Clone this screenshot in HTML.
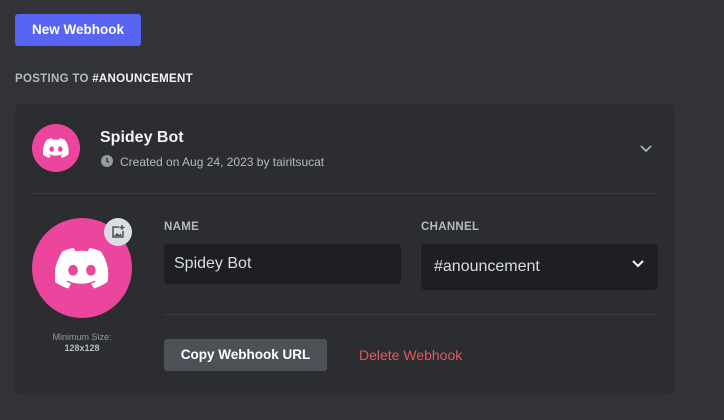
<!DOCTYPE html>
<html><head><style>
*{margin:0;padding:0;box-sizing:border-box}
body{width:724px;height:420px;background:#313338;font-family:"Liberation Sans",sans-serif;position:relative;overflow:hidden;color:#f2f3f5}
.abs{position:absolute}
.btn{left:15px;top:14px;width:126px;height:32px;background:#5865f2;border-radius:3px;color:#fff;font-size:13.5px;font-weight:bold;text-align:center;line-height:32px}
.lbl{font-size:11.5px;font-weight:bold;color:#b5bac1;letter-spacing:.3px}
.card{left:15px;top:104px;width:660px;height:291px;background:#2b2d31;border-radius:6px}
.av{border-radius:50%;background:#eb459e;display:flex;align-items:center;justify-content:center}
.inp{background:#1e1f22;border-radius:4px;font-size:16px;color:#dbdee1;padding-left:10px}
</style></head><body>
<div class="abs btn">New Webhook</div>
<div class="abs lbl" style="left:15px;top:73px">POSTING TO <span style="color:#f2f3f5">#ANOUNCEMENT</span></div>
<div class="abs card"></div>
<div class="abs av" style="left:32px;top:124px;width:48px;height:48px">
<svg width="26" height="20" viewBox="0 0 26 20"><path fill="#fff" d="M22 2C20.3 1.2 18.5.6 16.6.3l-.8 1.6c-2-.3-4-.3-6 0L9 .3C7.1.6 5.3 1.2 3.6 2 .3 7 -.6 11.8-.2 16.6c2.2 1.6 4.4 2.6 6.5 3.3l1.4-2.3c-.8-.3-1.5-.7-2.2-1.1l.5-.4c4.3 2 8.9 2 13.1 0l.5.4c-.7.4-1.4.8-2.2 1.1l1.4 2.3c2.1-.7 4.3-1.7 6.5-3.3C26.3 11 25 6.2 22 2ZM8.7 13.7c-1.3 0-2.3-1.2-2.3-2.6s1-2.6 2.3-2.6 2.3 1.2 2.3 2.6-1 2.6-2.3 2.6Zm8.6 0c-1.3 0-2.3-1.2-2.3-2.6s1-2.6 2.3-2.6 2.3 1.2 2.3 2.6-1 2.6-2.3 2.6Z"/></svg></div>
<div class="abs" style="left:100px;top:129px;font-size:16px;font-weight:bold;color:#f2f3f5">Spidey Bot</div>
<svg class="abs" style="left:101px;top:155px" width="12" height="12" viewBox="0 0 12 12"><circle cx="6" cy="6" r="6" fill="#949ba4"/><path d="M6 3v3.3l2 1.2" stroke="#2b2d31" stroke-width="1.3" fill="none"/></svg>
<div class="abs" style="left:120px;top:155px;font-size:12px;color:#b5bac1">Created on Aug 24, 2023 by tairitsucat</div>
<svg class="abs" style="left:639px;top:143px" width="14" height="10" viewBox="0 0 14 10"><path d="M2 3l5 5 5-5" stroke="#b5bac1" stroke-width="1.6" fill="none"/></svg>
<div class="abs" style="left:32px;top:193px;width:626px;height:1px;background:#3a3c42"></div>
<div class="abs av" style="left:32px;top:218px;width:100px;height:100px">
<svg width="54" height="42" viewBox="0 0 26 20"><path fill="#fff" d="M22 2C20.3 1.2 18.5.6 16.6.3l-.8 1.6c-2-.3-4-.3-6 0L9 .3C7.1.6 5.3 1.2 3.6 2 .3 7 -.6 11.8-.2 16.6c2.2 1.6 4.4 2.6 6.5 3.3l1.4-2.3c-.8-.3-1.5-.7-2.2-1.1l.5-.4c4.3 2 8.9 2 13.1 0l.5.4c-.7.4-1.4.8-2.2 1.1l1.4 2.3c2.1-.7 4.3-1.7 6.5-3.3C26.3 11 25 6.2 22 2ZM8.7 13.7c-1.3 0-2.3-1.2-2.3-2.6s1-2.6 2.3-2.6 2.3 1.2 2.3 2.6-1 2.6-2.3 2.6Zm8.6 0c-1.3 0-2.3-1.2-2.3-2.6s1-2.6 2.3-2.6 2.3 1.2 2.3 2.6-1 2.6-2.3 2.6Z"/></svg></div>
<div class="abs" style="left:104px;top:218px;width:28px;height:28px;border-radius:50%;background:#dbdee1;display:flex;align-items:center;justify-content:center">
<svg width="16" height="16" viewBox="0 0 16 16"><path d="M9 3H3v10h10V7" stroke="#4e5058" stroke-width="1.5" fill="none"/><path d="M4 12l3-3 2 2 1.5-1.5L12 12z" fill="#4e5058"/><path d="M12 1v5M9.5 3.5h5" stroke="#4e5058" stroke-width="1.4"/></svg></div>
<div class="abs" style="left:32px;top:332px;width:100px;text-align:center;font-size:9px;color:#949ba4;line-height:11px">Minimum Size:<br><b style="color:#b5bac1">128x128</b></div>
<div class="abs lbl" style="left:164px;top:221px">NAME</div>
<div class="abs lbl" style="left:421px;top:221px">CHANNEL</div>
<div class="abs inp" style="left:164px;top:244px;width:237px;height:40px;line-height:40px">Spidey Bot</div>
<div class="abs inp" style="left:421px;top:244px;width:237px;height:46px;line-height:46px;padding-left:13px">#anouncement</div>
<svg class="abs" style="left:631px;top:258px" width="14" height="10" viewBox="0 0 14 10"><path d="M2 3l5 5 5-5" stroke="#fff" stroke-width="2" fill="none"/></svg>
<div class="abs" style="left:164px;top:314px;width:494px;height:1px;background:#3a3c42"></div>
<div class="abs" style="left:164px;top:339px;width:163px;height:32px;background:#4e5058;border-radius:3px;font-size:13.5px;font-weight:bold;text-align:center;line-height:32px;color:#fff">Copy Webhook URL</div>
<div class="abs" style="left:359px;top:347px;font-size:14px;color:#e5585b">Delete Webhook</div>
</body></html>
